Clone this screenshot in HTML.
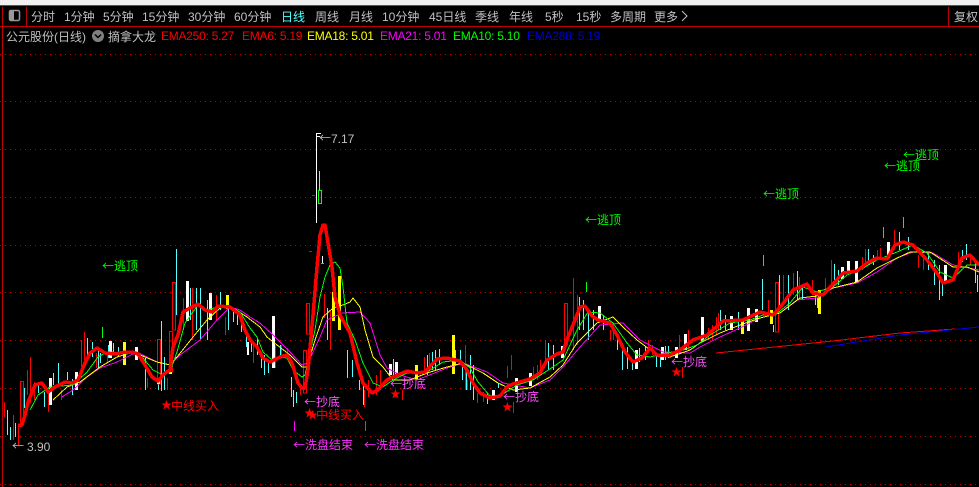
<!DOCTYPE html>
<html lang="zh"><head><meta charset="utf-8"><title>公元股份</title>
<style>
html,body{margin:0;padding:0;background:#000;width:979px;height:487px;overflow:hidden}
svg{display:block;position:absolute;left:0;top:0}
text{font-family:"Liberation Sans","WenQuanYi Zen Hei","Noto Sans CJK SC",sans-serif;font-size:12px}
.cjk text{font-family:"WenQuanYi Zen Hei","Noto Sans CJK SC",sans-serif}
.ema text{letter-spacing:-.25px}
</style></head><body>
<svg width="979" height="487" viewBox="0 0 979 487" xmlns="http://www.w3.org/2000/svg">
<rect width="979" height="487" fill="#000"/>
<rect width="979" height="5" fill="#f0f0f0"/><rect y="5" width="979" height="1" fill="#555"/>
<g shape-rendering="crispEdges">
<path d="M0 54.500H979M0 101.500H979M0 149.500H979M0 197.500H979M0 245.500H979M0 292.500H979M0 340.500H979M0 388.500H979M0 436.500H979M0 484.500H979" stroke="#c00000" stroke-dasharray="1 4" fill="none"/>
<path d="M2.500 7V487M26.500 7V26M948.500 7V26M0 26.500H979" stroke="#c00000" fill="none"/>
</g>
<rect x="9.500" y="10.500" width="10" height="10" rx="1.500" fill="none" stroke="#999" stroke-width="1.500"/><rect x="10" y="11" width="4" height="9" fill="#999"/>
<g fill="#c0c0c0">
<text x="31" y="21">分时</text><text x="64" y="21">1分钟</text><text x="103" y="21">5分钟</text><text x="142" y="21">15分钟</text><text x="188" y="21">30分钟</text><text x="234" y="21">60分钟</text>
<text x="281" y="21" fill="#54ffff">日线</text><text x="315" y="21">周线</text><text x="349" y="21">月线</text><text x="382" y="21">10分钟</text><text x="429" y="21">45日线</text><text x="475" y="21">季线</text><text x="509" y="21">年线</text><text x="545" y="21">5秒</text><text x="576" y="21">15秒</text><text x="610" y="21">多周期</text><text x="654" y="21">更多</text>
<text x="954" y="21">复权</text>
<text x="6" y="41">公元股份(日线)</text><text x="108" y="41">摘拿大龙</text>
</g>
<path d="M682 11l5 5-5 5" fill="none" stroke="#c0c0c0"/>
<circle cx="98" cy="36" r="6" fill="#808080"/><path d="M95 34.500l3 3 3-3" fill="none" stroke="#000" stroke-width="1.500"/>
<g class="ema"><text x="161" y="40" fill="#f00">EMA250: 5.27</text><text x="242" y="40" fill="#f00">EMA6: 5.19</text><text x="307" y="40" fill="#ff0">EMA18: 5.01</text><text x="380" y="40" fill="#f0f">EMA21: 5.01</text><text x="453" y="40" fill="#0f0">EMA10: 5.10</text><text x="527" y="40" fill="#0000d0">EMA288: 5.19</text></g>

<g shape-rendering="crispEdges" fill="none">
<path stroke="#54ffff" d="M7.500 410V435M10.500 427V440M15.500 423V437M24.500 388V408M38.500 382V393M44.500 392V407M53.500 373V385M58.500 363V387M67.500 372V380M72.500 379V395M87.500 338V358M92.500 342V357M98.500 348V368M100.500 353V363M108.500 345V358M113.500 343V355M118.500 347V357M125.500 350V358M145.500 358V390M158.500 378V390M161.500 321V391M164.500 357V390M176.500 249V315M190.500 288V320M196.500 288V330M200.500 288V340M207.500 300V340M220.500 292V310M228.500 296V330M233.500 310V322M237.500 312V325M241.500 322V332M246.500 332V347M251.500 340V352M257.500 338V355M261.500 353V368M264.500 355V375M268.500 360V373M280.500 345V357M291.500 377V397M293.500 390V407M296.500 392V403M319.500 171V190M327.500 308V340M347.500 350V378M352.500 360V377M359.500 380V390M363.500 385V405M393.500 359V376M427.500 355V375M432.500 352V370M435.500 350V370M439.500 349V365M455.500 350V365M460.500 350V360M462.500 365V380M466.500 370V390M470.500 355V390M473.500 365V400M487.500 393V404M498.500 383V388M548.500 343V370M553.500 345V370M579.500 297V330M583.500 300V330M588.500 310V340M593.500 310V330M603.500 315V330M617.500 335V350M622.500 345V370M627.500 347V369M632.500 360V370M639.500 348V362M645.500 347V360M656.500 355V367M660.500 355V367M665.500 346V360M668.500 346V358M720.500 310V330M725.500 315V330M738.500 312V330M762.500 279V310M773.500 325V332M779.500 275V305M788.500 275V310M797.500 271V300M802.500 285V300M815.500 295V305M817.500 298V308M834.500 264V285M838.500 270V285M868.500 249V265M873.500 255V265M899.500 232V250M908.500 237V250M928.500 252V270M934.500 260V285M939.500 265V300M942.500 280V296M962.500 250V262M966.500 244V260M975.500 260V283M977.500 275V292"/>
<path stroke="#f00" d="M4.500 402V417M13.500 415V440M18.500 425V445M27.500 370V395M30.500 357V403M34.500 382V400M48.500 390V412M61.500 390V400M81.500 340V367M84.500 332V360M96.500 353V368M107.500 353V363M147.500 378V388M167.500 378V390M183.500 298V330M192.500 288V340M216.500 295V320M225.500 317V335M253.500 343V363M275.500 345V368M281.500 345V357M287.500 348V360M300.500 387V395M324.500 294V318M330.500 310V350M364.500 390V407M368.500 380V397M376.500 375V395M380.500 370V390M402.500 390V400M424.500 357V375M429.500 353V370M465.500 345V390M467.500 380V390M477.500 393V403M483.500 392V402M507.500 366V378M511.500 355V370M513.500 402V413M533.500 367V380M537.500 365V380M540.500 360V375M545.500 340V365M573.500 278V350M577.500 295V345M610.500 330V340M613.500 325V340M648.500 340V352M652.500 345V355M679.500 335V350M682.500 367V378M688.500 330V350M708.500 328V340M712.500 325V340M716.500 317V335M718.500 313V330M768.500 300V315M783.500 275V300M793.500 273V295M799.500 277V300M812.500 280V295M825.500 278V295M831.500 260V285M862.500 257V270M865.500 249V262M877.500 250V260M880.500 248V260M894.500 230V250M918.500 255V268M923.500 258V270M958.500 252V265M970.500 255V265"/>
<path stroke="#f00" d="M20.500 381.500H23.500V424H20.500ZM157.500 339.500H160.500V384H157.500ZM169.500 331.500H172.500V372H169.500ZM172.500 282.500H175.500V330H172.500ZM306.500 303.500H309.500V334H306.500ZM303.500 350.500H306.500V393H303.500ZM564.500 303.500H567.500V345H564.500ZM775.500 282.500H778.500V332H775.500Z"/>
<path stroke="#0f0" d="M102.500 327V338M318.500 190.500H321.500V203.500H318.500ZM321 263.500H324M586.500 282V292M763.500 255V266M883.500 227V238M903.500 217V228"/>
<path stroke="#f00" d="M312 195.500H315M309 251.500H312"/>
<path stroke="#fff" d="M316.500 133V223M322.500 256V263M317 133.500H321M317 136.500H320"/>
<path stroke="#f0f" d="M294.500 421V431M365.500 421V431"/>
<path stroke="#f00" d="M716 353L833 341L900 333L955 329"/>
<path stroke="#0000e0" d="M826 347L900 335L940 331L979 327"/>
</g>

<g fill="#fff" shape-rendering="crispEdges">
<rect x="49" y="378" width="3" height="27"/><rect x="75" y="372" width="3" height="18"/><rect x="109" y="341" width="3" height="17"/><rect x="135" y="347" width="3" height="13"/><rect x="186" y="281" width="3" height="40"/><rect x="209" y="293" width="3" height="27"/><rect x="247" y="342" width="2" height="13"/><rect x="272" y="316" width="3" height="52"/><rect x="389" y="364" width="3" height="11"/><rect x="395" y="362" width="3" height="14"/><rect x="492" y="390" width="3" height="10"/><rect x="515" y="378" width="3" height="14"/><rect x="529" y="373" width="3" height="13"/><rect x="561" y="346" width="3" height="12"/><rect x="598" y="306" width="3" height="16"/><rect x="635" y="350" width="3" height="19"/><rect x="661" y="347" width="3" height="13"/><rect x="675" y="347" width="3" height="11"/><rect x="684" y="334" width="3" height="16"/><rect x="701" y="317" width="3" height="24"/><rect x="730" y="316" width="3" height="14"/><rect x="747" y="308" width="3" height="23"/><rect x="755" y="309" width="3" height="13"/><rect x="841" y="267" width="3" height="12"/><rect x="847" y="261" width="3" height="13"/><rect x="855" y="261" width="3" height="21"/><rect x="887" y="242" width="3" height="16"/><rect x="944" y="265" width="3" height="17"/>
</g>
<g fill="#ff0" shape-rendering="crispEdges">
<rect x="123" y="342" width="3" height="23"/><rect x="226" y="295" width="3" height="14"/><rect x="157" y="381" width="3" height="3"/><rect x="169" y="372" width="3" height="2"/><rect x="332" y="292" width="3" height="29"/><rect x="338" y="276" width="3" height="54"/><rect x="415" y="365" width="3" height="15"/><rect x="452" y="335" width="3" height="39"/><rect x="741" y="320" width="3" height="14"/><rect x="770" y="310" width="3" height="14"/><rect x="818" y="290" width="3" height="24"/>
</g>

<g fill="none" shape-rendering="crispEdges">
<polyline stroke="#f0f" points="62,397 73,390 87,377 100,368 117,362 137,352 157,362 170,365 180,355 200,340 217,320 230,307 240,310 250,317 260,323 273,335 290,352 302,365 308,363 320,337 327,320 342,313 360,312 370,323 380,355 387,368 400,375 417,380 447,368 463,363 487,372 503,383 530,388 550,380 563,367 580,347 600,325 623,323 640,340 663,352 690,353 700,347 720,337 740,328 760,318 780,313 797,300 817,298 833,288 857,283 877,272 897,258 913,252 933,253 953,265 979,270"/>
<polyline stroke="#ff0" points="53,400 67,387 80,382 100,367 117,357 133,352 157,362 170,365 177,357 193,337 207,320 220,308 230,306 247,317 260,327 267,337 277,345 290,355 302,367 307,367 315,340 323,317 333,308 343,305 350,302 353,298 360,307 365,330 373,357 383,367 393,380 410,380 427,373 447,367 463,363 483,373 498,383 513,390 530,388 550,377 563,365 577,343 597,323 613,317 623,327 637,340 657,355 670,357 690,350 700,343 720,333 740,325 760,318 780,313 800,298 817,296 833,288 857,282 877,268 893,260 910,252 930,252 953,267 967,267 979,272"/>
<polyline stroke="#0f0" points="30,410 38,395 50,387 73,385 87,372 98,357 107,352 133,353 143,358 153,370 163,375 170,372 177,352 185,323 198,305 208,310 217,307 230,306 240,312 250,328 257,337 263,352 272,360 280,357 287,358 293,370 302,377 305,375 310,353 315,330 320,297 325,277 330,265 335,262 340,268 343,287 347,323 355,340 363,363 373,383 383,387 393,380 407,373 427,372 443,362 460,360 470,368 478,382 490,396 500,396 517,385 533,380 553,367 563,360 577,330 588,312 600,313 613,323 627,343 637,355 650,357 667,353 683,350 697,345 710,335 730,323 750,320 763,315 775,315 790,303 803,287 817,292 833,287 847,275 860,270 877,260 897,252 913,245 927,253 940,272 953,278 967,265 979,265"/>
</g>
<polyline fill="none" stroke="#f00" stroke-width="3.500" stroke-linejoin="round" shape-rendering="crispEdges" points="18,425 22,425 25,415 28,402 35,385 42,383 48,392 55,387 65,382 72,383 78,380 85,363 90,353 97,348 105,353 115,354 125,352 132,352 138,354 145,365 152,377 158,381 165,373 170,370 173,347 178,335 183,312 190,308 198,304 205,310 212,312 218,306 230,307 240,315 245,330 250,340 257,347 263,358 270,362 280,357 287,355 292,363 298,383 302,388 305,388 308,370 313,315 317,267 320,235 323,225 325,225 328,243 332,267 335,297 340,315 350,333 357,363 363,383 372,393 378,390 387,380 393,377 407,371 417,373 425,372 437,359 447,358 460,361 467,370 473,383 480,393 490,398 500,396 507,387 513,384 530,379 540,373 547,360 557,354 563,352 568,337 575,320 580,307 585,306 592,316 598,320 610,323 617,335 625,352 633,362 642,358 650,348 657,355 670,355 680,350 693,340 707,335 723,321 743,320 760,312 773,315 782,305 793,290 807,284 813,293 823,295 832,285 843,273 857,271 867,263 877,258 887,259 895,245 903,242 913,245 927,260 937,273 943,283 953,280 962,258 970,255 979,265"/>

<g class="cjk">
<g fill="#0f0"><text x="102" y="270">←逃顶</text><text x="585" y="224">←逃顶</text><text x="763" y="198">←逃顶</text><text x="884" y="170">←逃顶</text><text x="903" y="159">←逃顶</text></g>
<g fill="#f00"><text x="171" y="410">中线买入</text><text x="316" y="419">中线买入</text></g>
<g fill="#ff50ff"><text x="304" y="406">←抄底</text><text x="390" y="388">←抄底</text><text x="503" y="401">←抄底</text><text x="671" y="366">←抄底</text></g>
<g fill="#ff30ff"><text x="293" y="449">←洗盘结束</text><text x="364" y="449">←洗盘结束</text></g>
<g fill="#c0c0c0"><text x="12" y="450">←</text><text x="319" y="142">←</text></g>
</g>
<g fill="#f00">
<path d="M166.500 400l1.300 3.500h3.700l-3 2.300 1.100 3.700-3.100-2.200-3.100 2.200 1.100-3.700-3-2.300h3.700z"/>
<path d="M309.500 408l1.300 3.500h3.700l-3 2.300 1.100 3.700-3.100-2.200-3.100 2.200 1.100-3.700-3-2.300h3.700z"/>
<path d="M312.500 410l1.300 3.500h3.700l-3 2.300 1.100 3.700-3.100-2.200-3.100 2.200 1.100-3.700-3-2.300h3.700z"/>
<path d="M395.500 389l1.300 3.500h3.700l-3 2.300 1.100 3.700-3.100-2.200-3.100 2.200 1.100-3.700-3-2.300h3.700z"/>
<path d="M507.500 402l1.300 3.500h3.700l-3 2.300 1.100 3.700-3.100-2.200-3.100 2.200 1.100-3.700-3-2.300h3.700z"/>
<path d="M676.500 367l1.300 3.500h3.700l-3 2.300 1.100 3.700-3.100-2.200-3.100 2.200 1.100-3.700-3-2.300h3.700z"/>
</g>
<g fill="#c0c0c0"><text x="27" y="451">3.90</text><text x="331" y="143">7.17</text></g>
</svg>
</body></html>
